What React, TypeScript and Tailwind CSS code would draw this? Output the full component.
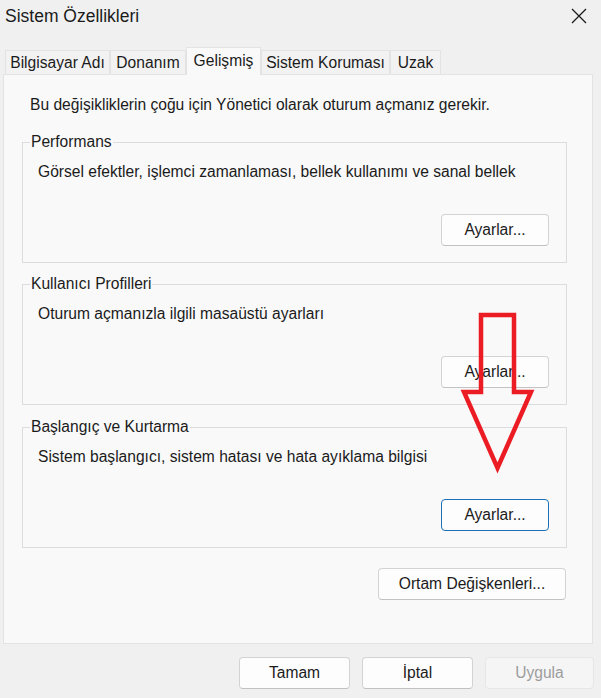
import clsx from 'clsx'

const tabs = [
  { label: 'Bilgisayar Adı', w: 'w-[105px]' },
  { label: 'Donanım', w: 'w-[76px]' },
  { label: 'Gelişmiş', w: 'w-[75px]', active: true },
  { label: 'Sistem Koruması', w: 'w-[129px]' },
  { label: 'Uzak', w: 'w-[51px]' },
]

const groups = [
  { title: 'Performans', text: 'Görsel efektler, işlemci zamanlaması, bellek kullanımı ve sanal bellek', mt: 'mt-[27px]' },
  { title: 'Kullanıcı Profilleri', text: 'Oturum açmanızla ilgili masaüstü ayarları', mt: 'mt-[21px]' },
  { title: 'Başlangıç ve Kurtarma', text: 'Sistem başlangıcı, sistem hatası ve hata ayıklama bilgisi', mt: 'mt-[22px]', focused: true },
]

function WinButton({
  children,
  className,
  focused,
  disabled,
}: {
  children: React.ReactNode
  className?: string
  focused?: boolean
  disabled?: boolean
}) {
  return (
    <button
      type="button"
      disabled={disabled}
      className={clsx(
        'flex h-[32px] items-center justify-center rounded-[4px] text-[15.6px] leading-none',
        disabled
          ? 'border border-[#e6e6e6] bg-[#f5f5f5] text-[#9d9d9d]'
          : focused
            ? 'border-[1.5px] border-[#1f6fb5] bg-[#fdfdfd] text-[#1b1b1b]'
            : 'border border-[#d3d3d3] border-b-[#c2c2c2] bg-[#fdfdfd] text-[#1b1b1b]',
        className,
      )}
    >
      {children}
    </button>
  )
}

export default function App() {
  return (
    <div className="relative flex h-[698px] w-[601px] flex-col overflow-hidden bg-[#f0f0f0] font-['Liberation_Sans',Arial,sans-serif] text-[#1b1b1b]">
      {/* title bar */}
      <div className="flex h-[31px] items-center justify-between pl-[5px] pr-[14px] pt-[1px]">
        <span className="text-[17.5px]">Sistem Özellikleri</span>
        <svg width="16" height="16" viewBox="0 0 16 16" className="mt-[-1px]">
          <path d="M1 1 L15 15 M15 1 L1 15" stroke="#1b1b1b" strokeWidth="1.3" fill="none" />
        </svg>
      </div>

      {/* tabs */}
      <div className="mt-[16px] flex h-[27px] items-end pl-[5px]">
        {tabs.map((t) => (
          <div
            key={t.label}
            className={clsx(
              'flex items-center justify-center border border-b-0 border-[#e3e3e3] text-[15.6px]',
              t.w,
              t.active
                ? 'relative z-10 mb-[-1px] h-[28px] bg-[#f9f9f9] pb-[2px]'
                : 'h-[24px] bg-[#f2f2f2]',
            )}
          >
            {t.label}
          </div>
        ))}
      </div>

      {/* panel */}
      <div className="ml-[3px] flex h-[570px] w-[590px] flex-col border border-[#e3e3e3] bg-[#f9f9f9] pl-[18px] pt-[20px]">
        <p className="pl-[8px] text-[15.6px] leading-[20px]">
          Bu değişikliklerin çoğu için Yönetici olarak oturum açmanız gerekir.
        </p>

        <div className="flex w-[545px] flex-col">
          {groups.map((g) => (
            <div
              key={g.title}
              className={clsx(
                'relative flex h-[121px] flex-col justify-between border border-[#dcdcdc] pb-[16px] pl-[15px] pr-[17px] pt-[19px]',
                g.mt,
              )}
            >
              <span className="absolute left-[7px] top-[-11px] bg-[#f9f9f9] px-[1px] text-[15.6px] leading-[20px]">
                {g.title}
              </span>
              <p className="text-[15.6px] leading-[20px]">{g.text}</p>
              <WinButton focused={g.focused} className="w-[108px] self-end">
                Ayarlar...
              </WinButton>
            </div>
          ))}

          <WinButton className="mr-[1px] mt-[20px] w-[188px] self-end">Ortam Değişkenleri...</WinButton>
        </div>
      </div>

      {/* dialog buttons */}
      <div className="mt-[13px] flex justify-end gap-[12px] pr-[7px]">
        <WinButton className="w-[111px]">Tamam</WinButton>
        <WinButton className="w-[111px]">İptal</WinButton>
        <WinButton disabled className="w-[109px]">
          Uygula
        </WinButton>
      </div>

      {/* red annotation arrow */}
      <svg
        className="absolute left-[460px] top-[310px]"
        width="76"
        height="165"
        viewBox="0 0 76 165"
      >
        <polygon
          points="21,5 54,5 54,82 71,82 37.5,158 4,82 21,82"
          fill="none"
          stroke="#ec1c24"
          strokeWidth="4.5"
          strokeLinejoin="miter"
        />
      </svg>
    </div>
  )
}
